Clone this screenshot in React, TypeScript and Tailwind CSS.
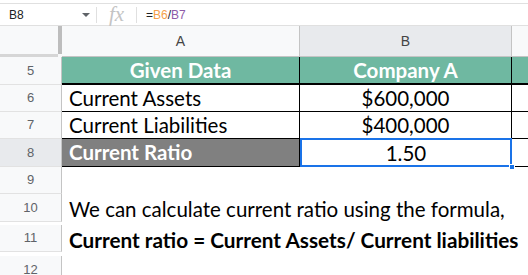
import React from 'react';

const cellFont = { fontFamily: 'Lato, "Open Sans", sans-serif' };

const rows = [
  { n: 5, h: 'h-[28px]' },
  { n: 6, h: 'h-[27px]' },
  { n: 7, h: 'h-[27px]' },
  { n: 8, h: 'h-[28px]' },
  { n: 9, h: 'h-[27px]' },
  { n: 10, h: 'h-[28px]' },
  { n: 11, h: 'h-[27px]' },
  { n: 12, h: 'h-[28px]' },
];

function RowHead({ n, h, active }: { n: number; h: string; active?: boolean }) {
  return (
    <div
      className={`${h} flex items-center justify-center border-r border-b border-r-[#c4c4c4] border-b-[#e2e2e2] text-[13px] text-[#5f6368] ${
        active ? 'bg-[#e8eaed]' : 'bg-[#f8f9fa]'
      }`}
      style={{ fontFamily: '"Liberation Sans", Arial, sans-serif' }}
    >
      {n}
    </div>
  );
}

export default function App() {
  return (
    <div className="w-[528px] h-[275px] overflow-hidden bg-white" style={{ fontFamily: '"Liberation Sans", Arial, sans-serif' }}>
      {/* formula bar */}
      <div className="mt-[3px] h-[23px] flex items-center border-t border-b border-[#e0e0e0] bg-white">
        <div className="w-[96px] flex items-center justify-between pl-[9px] pr-[6px]">
          <span className="text-[12px] text-[#202124]">B8</span>
          <span className="w-0 h-0 border-l-[4px] border-r-[4px] border-t-[4px] border-l-transparent border-r-transparent border-t-[#5f6368]" />
        </div>
        <div className="w-px h-[16px] bg-[#e0e0e0]" />
        <div className="w-[39px] flex justify-center">
          <span className="italic text-[21px] leading-none text-[#c4c4c4]" style={{ fontFamily: '"Liberation Serif", serif' }}>
            fx
          </span>
        </div>
        <div className="w-px h-[16px] bg-[#e0e0e0]" />
        <div className="pl-[9px] text-[12px] text-[#202124]">
          =<span className="text-[#f4a14a]">B6</span>/<span className="text-[#8e5ba9]">B7</span>
        </div>
      </div>

      {/* grid */}
      <div className="grid grid-cols-[62px_238px_212px_1fr]">
        {/* column headers */}
        <div className="h-[31px] bg-[#f8f9fa] relative">
          <div className="absolute right-0 top-0 w-[4px] h-[28px] bg-[#bdbdbd]" />
          <div className="absolute left-0 bottom-0 w-[58px] h-[3px] bg-[#d6d6d6]" />
        </div>
        <div className="h-[31px] flex items-center justify-center bg-[#f8f9fa] border-r border-b border-[#c4c4c4] text-[14px] text-[#444]">
          A
        </div>
        <div className="h-[31px] flex items-center justify-center bg-[#e8eaed] border-r border-b border-[#c4c4c4] text-[14px] text-[#444]">
          B
        </div>
        <div className="h-[31px] bg-[#f8f9fa] border-b border-[#c4c4c4]" />

        {/* row 5 */}
        <RowHead n={5} h={rows[0].h} />
        <div
          className="h-[28px] flex items-center justify-center bg-[#6fb8a1] border-r border-b-2 border-black text-white font-bold text-[20.5px]"
          style={cellFont}
        >
          Given Data
        </div>
        <div
          className="h-[28px] flex items-center justify-center bg-[#6fb8a1] border-r border-b-2 border-black text-white font-bold text-[20.5px]"
          style={cellFont}
        >
          Company A
        </div>
        <div className="h-[28px] bg-[#6fb8a1] border-b-2 border-black" />

        {/* row 6 */}
        <RowHead n={6} h={rows[1].h} />
        <div className="h-[27px] flex items-center pl-[7px] border-r border-b border-black text-[20.5px] text-black" style={cellFont}>
          Current Assets
        </div>
        <div className="h-[27px] flex items-center justify-center border-r border-b border-black text-[20.5px] text-black" style={cellFont}>
          $600,000
        </div>
        <div className="h-[27px] border-b border-black" />

        {/* row 7 */}
        <RowHead n={7} h={rows[2].h} />
        <div className="h-[27px] flex items-center pl-[7px] border-r border-b border-black text-[20.5px] text-black" style={cellFont}>
          Current Liabilities
        </div>
        <div className="h-[27px] flex items-center justify-center border-r border-b border-black text-[20.5px] text-black" style={cellFont}>
          $400,000
        </div>
        <div className="h-[27px] border-b border-black" />

        {/* row 8 */}
        <RowHead n={8} h={rows[3].h} active />
        <div
          className="h-[28px] flex items-center pl-[7px] bg-[#808080] border-r border-b border-black text-[20.5px] font-bold text-white"
          style={cellFont}
        >
          Current Ratio
        </div>
        <div className="h-[28px] relative flex items-center justify-center text-[20.5px] text-black" style={cellFont}>
          1.50
          <div className="absolute inset-0 -top-px border-2 border-[#1a73e8]" />
          <div className="absolute -right-[3px] -bottom-[3px] w-[6px] h-[6px] bg-[#1a73e8] border border-white" />
        </div>
        <div className="h-[28px] border-b border-black" />

        {/* row 9 */}
        <RowHead n={9} h={rows[4].h} />
        <div className="col-span-3" />

        {/* row 10 */}
        <RowHead n={10} h={rows[5].h} />
        <div className="col-span-3 flex items-center pl-[7px] text-[20.5px] text-black whitespace-nowrap" style={cellFont}>
          We can calculate current ratio using the formula,
        </div>

        {/* row 11 */}
        <RowHead n={11} h={rows[6].h} />
        <div className="col-span-3 flex items-center pl-[7px] text-[20.75px] font-bold text-black whitespace-nowrap" style={cellFont}>
          Current ratio = Current Assets/ Current liabilities
        </div>

        {/* row 12 */}
        <RowHead n={12} h={rows[7].h} />
        <div className="col-span-3" />
      </div>
    </div>
  );
}
